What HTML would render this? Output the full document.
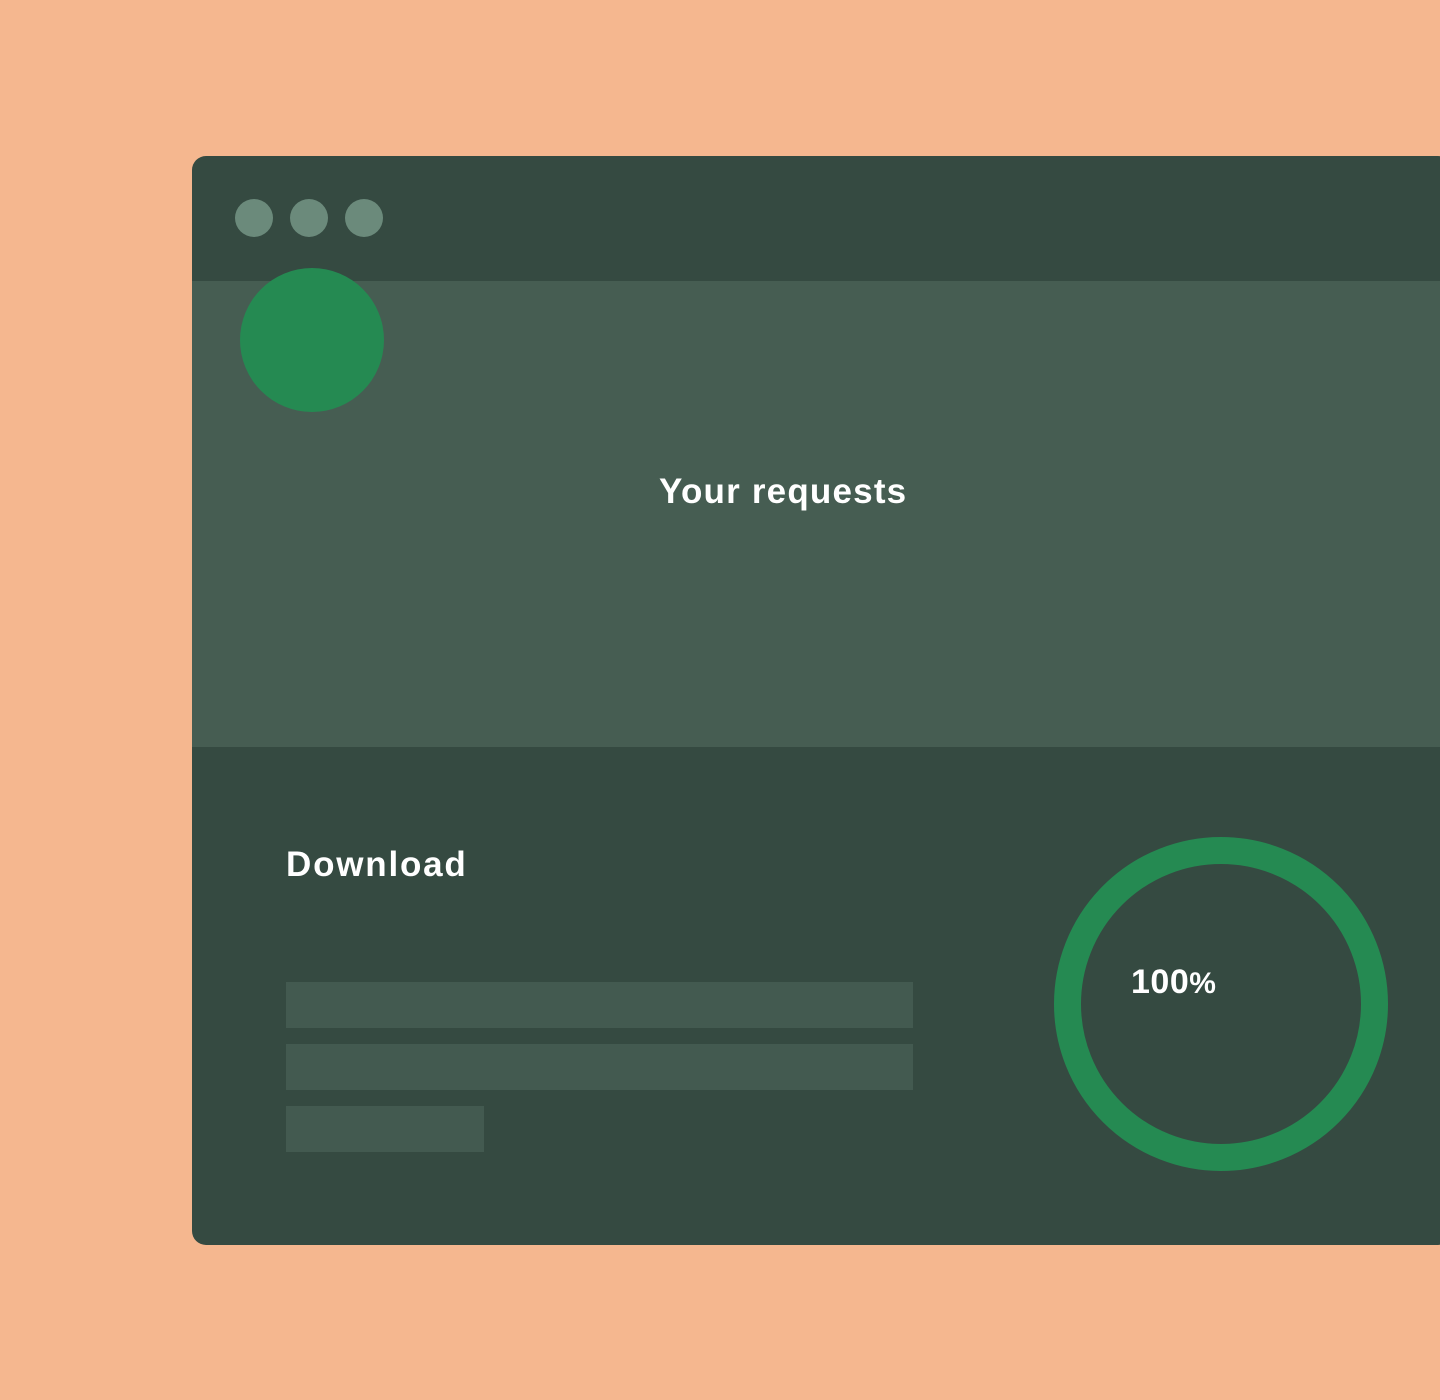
<!DOCTYPE html>
<html><head><meta charset="utf-8"><style>
html,body{margin:0;padding:0}
body{width:1440px;height:1400px;background:#F5B78F;position:relative;overflow:hidden;font-family:"Liberation Sans",sans-serif}
.win{position:absolute;left:192px;top:156px;width:1260px;height:1089px;background:#354A41;border-radius:14px;overflow:hidden}
.hdr{position:absolute;left:0;top:125px;width:100%;height:466px;background:#465D52}
.dot{position:absolute;top:43px;width:38px;height:38px;border-radius:50%;background:#6B8A7B}
.av{position:absolute;left:48px;top:112px;width:144px;height:144px;border-radius:50%;background:#258A52}
.t{position:absolute;color:#fff;font-weight:bold;white-space:nowrap}
.bar{position:absolute;left:94px;height:46px;background:#435A50}
</style></head><body>
<div class="win">
<div class="hdr"></div>
<div class="dot" style="left:43px"></div>
<div class="dot" style="left:98px"></div>
<div class="dot" style="left:153px"></div>
<div class="av"></div>
<div class="t" style="left:467px;top:316px;font-size:35px;letter-spacing:1.2px">Your requests</div>
<div class="t" style="left:94px;top:689px;font-size:35px;letter-spacing:1.8px">Download</div>
<div class="bar" style="top:826px;width:627px"></div>
<div class="bar" style="top:888px;width:627px"></div>
<div class="bar" style="top:950px;width:198px"></div>
<svg style="position:absolute;left:862px;top:681px" width="336" height="336"><circle cx="167" cy="167" r="153.5" fill="none" stroke="#258A52" stroke-width="27"/></svg>
<div class="t" style="left:939px;top:807px;font-size:34px;letter-spacing:0.5px">100<span style="font-size:30px">%</span></div>
</div>
</body></html>
